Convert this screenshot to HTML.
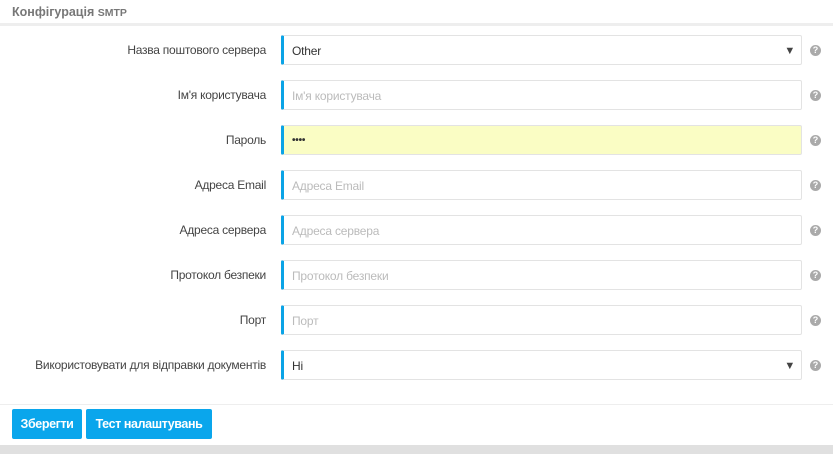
<!DOCTYPE html><html><head><meta charset="utf-8"><style>
body{margin:0;width:833px;height:454px;background:#fff;font-family:"Liberation Sans",sans-serif;position:relative;overflow:hidden}
.hdr{position:absolute;left:0;top:0;width:833px;height:23px;border-bottom:3px solid #eee;}
.hdr span{position:absolute;left:12px;top:5px;font-size:12.5px;font-weight:bold;color:#777}
.hdr small{font-size:10.5px}
.lbl{position:absolute;right:567px;font-size:12px;letter-spacing:-0.25px;color:#444;text-align:right;white-space:nowrap}
.in{position:absolute;left:281px;width:509px;height:28px;border:1px solid #e3e3e3;border-left:3px solid #0aa3e6;border-radius:2px;background:#fff;font-size:12px;letter-spacing:-0.2px;color:#bbb;line-height:30px;padding-left:8px;box-sizing:content-box}
.in.v{color:#333}
.arr{position:absolute;right:6px;top:0;font-size:11px;color:#444}
.q{position:absolute;left:810px;width:11px;height:11px;border-radius:50%;background:#aaa;color:#fff;font-size:9px;font-weight:bold;line-height:11px;text-align:center}
.foot{position:absolute;left:0;top:404px;width:833px;border-top:1px solid #eee}
.btn{position:absolute;top:409px;height:30px;background:#0aa6ec;color:#fff;font-weight:bold;font-size:12.5px;letter-spacing:-0.4px;line-height:30px;text-align:center;border-radius:2px}
.band{position:absolute;left:0;top:445px;width:833px;height:9px;background:#e0e0e0}
</style></head><body>
<div class="hdr"><span>Конфігурація <small>SMTP</small></span></div>

<div class="lbl" style="top:43px">Назва поштового сервера</div>
<div class="in v" style="top:35px">Other<span class="arr">▼</span></div>
<div class="q" style="top:45px">?</div>

<div class="lbl" style="top:88px">Ім'я користувача</div>
<div class="in" style="top:80px">Ім'я користувача</div>
<div class="q" style="top:90px">?</div>

<div class="lbl" style="top:133px">Пароль</div>
<div class="in v" style="top:125px;background:#fafdc4;font-size:10px;font-weight:bold">••••</div>
<div class="q" style="top:135px">?</div>

<div class="lbl" style="top:178px">Адреса Email</div>
<div class="in" style="top:170px">Адреса Email</div>
<div class="q" style="top:180px">?</div>

<div class="lbl" style="top:223px">Адреса сервера</div>
<div class="in" style="top:215px">Адреса сервера</div>
<div class="q" style="top:225px">?</div>

<div class="lbl" style="top:268px">Протокол безпеки</div>
<div class="in" style="top:260px">Протокол безпеки</div>
<div class="q" style="top:270px">?</div>

<div class="lbl" style="top:313px">Порт</div>
<div class="in" style="top:305px">Порт</div>
<div class="q" style="top:315px">?</div>

<div class="lbl" style="top:358px">Використовувати для відправки документів</div>
<div class="in v" style="top:350px">Ні<span class="arr">▼</span></div>
<div class="q" style="top:360px">?</div>

<div class="foot"></div>
<div class="btn" style="left:12px;width:70px">Зберегти</div>
<div class="btn" style="left:86px;width:126px">Тест налаштувань</div>
<div class="band"></div>
</body></html>
